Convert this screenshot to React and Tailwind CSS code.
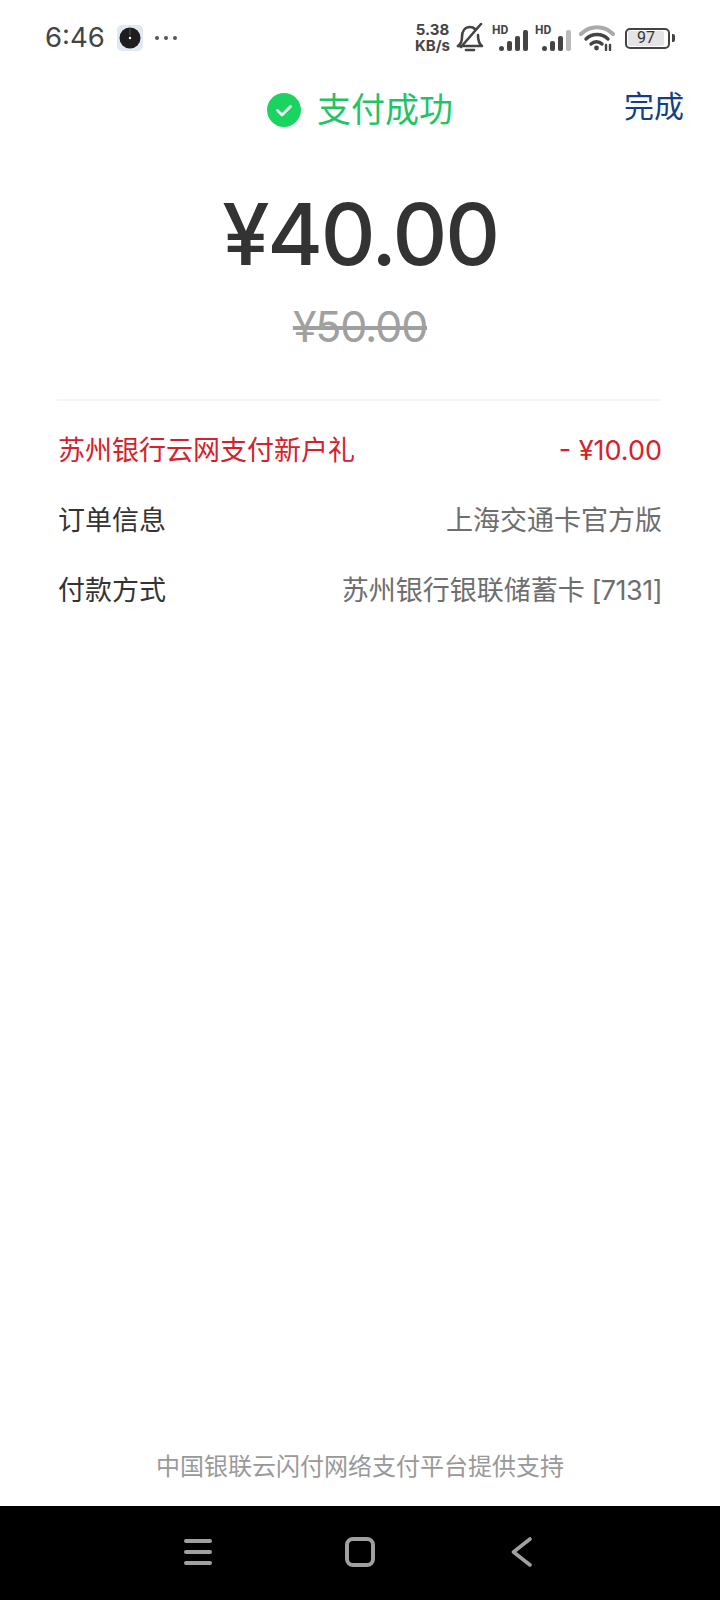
const sans = "font-['Roboto','Noto_Sans_CJK_SC',sans-serif]";
const num = "font-['Inter','Noto_Sans_CJK_SC',sans-serif]";

function Signal({ faded }) {
  return (
    <div className="relative flex h-[26px] w-[36px] items-end justify-end gap-[3px]">
      <span className="absolute left-0 top-0 text-[12px] font-bold leading-[11px] text-[#444]">HD</span>
      <span className="h-[5px] w-[5px] rounded-full bg-[#444]" />
      <span className="h-[10px] w-[5px] rounded-[2px] bg-[#444]" />
      <span className="h-[15px] w-[5px] rounded-[2px] bg-[#444]" />
      <span className={`h-[21px] w-[5px] rounded-[2px] ${faded ? "bg-[#bbb]" : "bg-[#444]"}`} />
    </div>
  );
}

function StatusBar() {
  return (
    <div className="flex h-[76px] shrink-0 items-center justify-between pl-[45px] pr-[45px] text-[#444]">
      <div className="flex items-center">
        <span className={`${num} text-[27.5px] leading-none text-[#444]`}>6:46</span>
        <svg width="26" height="26" viewBox="0 0 26 26" className="ml-[12px]">
          <rect width="26" height="26" rx="5" fill="#e1e8f2" />
          <circle cx="13" cy="13" r="10.5" fill="#1d1d20" />
          <rect x="12.5" y="3.5" width="1" height="7" fill="#555" />
          <circle cx="13" cy="13" r="1.2" fill="#fff" />
        </svg>
        <div className="ml-[12px] flex gap-[5px]">
          <span className="h-[4px] w-[4px] rounded-full bg-[#555]" />
          <span className="h-[4px] w-[4px] rounded-full bg-[#555]" />
          <span className="h-[4px] w-[4px] rounded-full bg-[#555]" />
        </div>
      </div>
      <div className="flex items-center">
        <div className={`${num} flex flex-col items-center text-[15px] font-bold leading-[16px] text-[#444]`}>
          <span>5.38</span>
          <span>KB/s</span>
        </div>
        <svg width="28" height="30" viewBox="0 0 28 30" fill="none" stroke="#444" strokeWidth="2.6" strokeLinecap="round" strokeLinejoin="round" className="ml-[6px]">
          <path d="M2 23c3-2 4-4 4-9 0-6 3-10 8-10 2 0 4 1 5 2" />
          <path d="M22 12c0 5 1 9 4 11H2" />
          <path d="M10 27h8" />
          <path d="M25 1 5 24" />
        </svg>
        <div className="ml-[8px]"><Signal /></div>
        <div className="ml-[7px]"><Signal faded /></div>
        <svg width="36" height="26" viewBox="0 0 36 26" fill="none" strokeLinecap="round" className="ml-[8px]">
          <path d="M2 9C11 0 25 0 34 9" stroke="#aaa" strokeWidth="4" />
          <path d="M7 14c6-6 16-6 22 0" stroke="#444" strokeWidth="3.4" />
          <path d="M12 19c3-3 8-3 11 0" stroke="#444" strokeWidth="3.4" />
          <circle cx="17.5" cy="23" r="2.4" fill="#444" />
          <path d="M27 20v5M31 20v5" stroke="#444" strokeWidth="2.4" />
        </svg>
        <div className="ml-[10px] flex items-center">
          <div className="flex h-[21px] w-[45px] items-center rounded-[5px] border-2 border-[#444] p-[1px]">
            <div className={`${sans} flex h-full w-[36px] items-center justify-center rounded-[2px] bg-[#e4e4e4] text-[16px] leading-none text-[#333]`}>97</div>
          </div>
          <span className="ml-[2px] h-[8px] w-[3px] rounded-r-[2px] bg-[#444]" />
        </div>
      </div>
    </div>
  );
}

function Row({ left, right, red }) {
  return (
    <div className={`flex h-[70px] items-center justify-between ${red ? "text-[#d6212b]" : ""}`}>
      <span className={red ? "" : "text-[#333]"}>{left}</span>
      <span className={red ? "" : "text-[#6e6e6e]"}>{right}</span>
    </div>
  );
}

export default function App() {
  return (
    <div className={`${sans} flex h-[1600px] w-[720px] flex-col bg-white`}>
      <StatusBar />
      <div className="grid h-[68px] shrink-0 grid-cols-[1fr_auto_1fr] items-center pr-[36px]">
        <div />
        <div className="flex items-center gap-[16px] pl-[36px]">
          <svg width="34" height="34" viewBox="0 0 34 34">
            <circle cx="17" cy="17" r="17" fill="#1bd45f" />
            <path d="M10.5 17.5 15 22l8.5-8.5" fill="none" stroke="#fff" strokeWidth="2.6" strokeLinecap="round" strokeLinejoin="round" />
          </svg>
          <span className="text-[34px] leading-none text-[#1fc565]">支付成功</span>
        </div>
        <span className="justify-self-end pb-[6px] text-[30px] leading-none text-[#123f85]">完成</span>
      </div>
      <div className={`${num} mt-[41px] text-center text-[85px] font-medium leading-[100px] tracking-[-2.2px] text-[#333]`}>¥40.00</div>
      <div className={`${num} mt-[16px] text-center text-[43px] leading-[50px] tracking-[-1.2px] text-[#a0a0a0] line-through`}>¥50.00</div>
      <div className="ml-[57px] mr-[59px] mt-[48px] border-t-2 border-[#f3f3f3]" />
      <div className="mx-[58px] mt-[15px] flex flex-col text-[27px]">
        <Row red left="苏州银行云网支付新户礼" right={<span className={num}>- ¥10.00</span>} />
        <Row left="订单信息" right="上海交通卡官方版" />
        <Row left="付款方式" right={<span>苏州银行银联储蓄卡 <span className={`${num} tracking-[-0.5px]`}>[7131]</span></span>} />
      </div>
      <div className="mt-auto mb-[24px] text-center text-[24px] leading-[30px] text-[#999]">中国银联云闪付网络支付平台提供支持</div>
      <div className="flex h-[94px] shrink-0 items-center bg-black pb-[2px] pl-[184px]">
        <div className="flex h-[26px] w-[28px] flex-col justify-between">
          <span className="h-[4px] rounded-full bg-[#a0a0a0]" />
          <span className="h-[4px] rounded-full bg-[#a0a0a0]" />
          <span className="h-[4px] rounded-full bg-[#a0a0a0]" />
        </div>
        <div className="ml-[133px] h-[30px] w-[30px] rounded-[8px] border-[4px] border-[#a0a0a0]" />
        <svg width="22" height="32" viewBox="0 0 22 32" fill="none" stroke="#a0a0a0" strokeWidth="3.6" strokeLinecap="round" strokeLinejoin="round" className="ml-[136px]">
          <path d="M19 3 2.5 16 19 29" />
        </svg>
      </div>
    </div>
  );
}
